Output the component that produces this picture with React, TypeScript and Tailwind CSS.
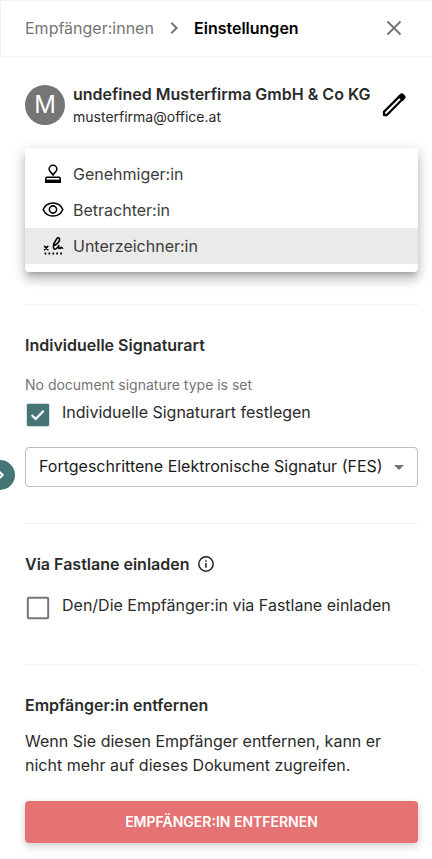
import type { ReactNode } from 'react';

function StampIcon() {
  return (
    <svg className="size-6 shrink-0" viewBox="0 0 24 24" fill="none" stroke="#000" strokeWidth="1.5">
      <path d="M12 13C11 10.8 8.1 9.6 8.1 7.2a3.9 3.9 0 0 1 7.8 0C15.9 9.6 13 10.8 12 13Z" />
      <path d="M4.9 20.3v-4.2c0-.6.3-.9.9-.9h12.4c.6 0 .9.3.9.9v4.2Z" />
      <path d="M4.2 17.6h15.6V21H4.2z" fill="#000" stroke="none" />
    </svg>
  );
}

function EyeIcon() {
  return (
    <svg className="size-6 shrink-0" viewBox="0 0 24 24" fill="none" stroke="#000" strokeWidth="1.6">
      <path d="M2.2 11.5C4 7.2 7.6 5 12 5s8 2.2 9.8 6.5c-1.8 4.3-5.4 6.5-9.8 6.5s-8-2.2-9.8-6.5Z" />
      <circle cx="12" cy="11.5" r="3.6" />
    </svg>
  );
}

function SignIcon() {
  return (
    <svg className="size-6 shrink-0" viewBox="0 0 24 24" fill="none" stroke="#000" strokeWidth="1.6" strokeLinecap="round" strokeLinejoin="round">
      <path d="m3.6 12.4 3.2 3.2m0-3.2-3.2 3.2" />
      <path d="M12.6 11.8c3.2-1.4 6-4.2 6-6.5 0-1.8-1.8-2-3-.4-1.8 2.3-3.2 5.2-3.2 7.7 0 2.4 1 3.2 2.5 2.3 1.3-.8 2.3-2.1 2.9-3.3-.4 1.7-.2 3 .8 2.9.8-.1 1.1-1.2 1.7-1.1.5.2.4.8 1.3.8" />
      <path d="M3.6 19.5h17.6" strokeWidth="1.8" strokeDasharray="1.7 2.2" strokeLinecap="butt" />
    </svg>
  );
}

function Option({ icon, label, active }: { icon: ReactNode; label: string; active?: boolean }) {
  return (
    <div className={`flex h-9 items-center gap-2 px-4 ${active ? 'bg-[#eaeaea]' : ''}`}>
      {icon}
      <span className="text-[#3c3c3c]">{label}</span>
    </div>
  );
}

export default function App() {
  return (
    <div className="relative h-[859px] w-[432px] overflow-hidden bg-white font-['Inter',sans-serif] text-base leading-6 text-[#2b2b2b]">
      <header className="flex h-[57px] items-center border border-r-0 border-[#f0f0f7] pb-px pl-6">
        <span className="w-[129px] text-[#757575]">Empfänger:innen</span>
        <svg className="ml-2 size-6" viewBox="0 0 24 24" fill="none" stroke="#757575" strokeWidth="2">
          <path d="m9.3 6.7 5.3 5.3-5.3 5.3" />
        </svg>
        <span className="ml-2 font-semibold text-black">Einstellungen</span>
        <svg className="mr-[26px] ml-auto size-6" viewBox="0 0 24 24" fill="none" stroke="#757575" strokeWidth="1.9">
          <path d="m5.5 5.5 13 13m0-13-13 13" />
        </svg>
      </header>

      <main className="pr-3.5 pl-[25px]">
        <section className="flex h-[91px] items-center pt-1">
          <div className="flex size-10 items-center justify-center rounded-full bg-[#757575] text-2xl text-white">M</div>
          <div className="ml-2 flex-1 whitespace-nowrap">
            <div className="font-semibold leading-6">undefined Musterfirma GmbH &amp; Co KG</div>
            <div className="text-sm leading-[21px]">musterfirma@office.at</div>
          </div>
          <svg className="mr-3 size-6 shrink-0" viewBox="0 0 24 24" fill="none" stroke="#000" strokeWidth="2.3" strokeLinejoin="round">
            <path d="M2 22v-3.2L18 2.9l2.9 2.9L4.9 22Z" />
            <path d="m15.6 3.4 2.3-2.2a2.7 2.7 0 0 1 3.8 0l1 1a2.7 2.7 0 0 1 0 3.8l-2.3 2.3Z" fill="#000" stroke="none" />
          </svg>
        </section>

        <div className="h-[124px] rounded bg-white py-2 shadow-[0_5px_5px_-3px_rgba(0,0,0,0.2),0_8px_10px_1px_rgba(0,0,0,0.14),0_3px_14px_2px_rgba(0,0,0,0.12)]">
          <Option icon={<StampIcon />} label="Genehmiger:in" />
          <Option icon={<EyeIcon />} label="Betrachter:in" />
          <Option icon={<SignIcon />} label="Unterzeichner:in" active />
        </div>

        <section className="mt-8 h-[219px] border-t border-[#f0f0f7] pt-7">
          <h2 className="font-semibold">Individuelle Signaturart</h2>
          <p className="mt-[18px] text-sm leading-5 text-[#757575]">No document signature type is set</p>
          <div className="flex h-10 gap-3">
            <svg className="mt-2 ml-[1px] size-6" viewBox="0 0 24 24">
              <rect x=".8" y=".8" width="22.4" height="22.4" rx="1.5" fill="#457575" />
              <path d="m5.7 12 4 4 8-8.2" fill="none" stroke="#fff" strokeWidth="2.2" />
            </svg>
            <span className="mt-[5px]">Individuelle Signaturart festlegen</span>
          </div>
          <div className="mt-3 flex h-10 items-center justify-between rounded border border-[#bdbdbd] px-[13px]">
            <span className="pb-0.5 text-[#1c1c1c]">Fortgeschrittene Elektronische Signatur (FES)</span>
            <svg className="h-[5px] w-[10px]" viewBox="0 0 10 5"><path d="M0 0h10L5 5Z" fill="#757575" /></svg>
          </div>
        </section>

        <section className="h-[141px] border-t border-[#eeeeee] pt-7">
          <h2 className="flex items-center font-semibold">
            Via Fastlane einladen
            <svg className="ml-2 size-4" viewBox="0 0 16 16" fill="none" stroke="#222" strokeWidth="1.5">
              <circle cx="8" cy="8" r="7.2" />
              <path d="M8 7v4.8M8 4.3v1.5" />
            </svg>
          </h2>
          <div className="mt-3 flex h-10 gap-3">
            <svg className="mt-2 ml-[1px] size-6" viewBox="0 0 24 24" fill="none" stroke="#757575" strokeWidth="2">
              <rect x="1.8" y="1.8" width="20.4" height="20.4" rx="1" />
            </svg>
            <span className="mt-[5px]">Den/Die Empfänger:in via Fastlane einladen</span>
          </div>
        </section>

        <section className="border-t border-[#f0f0f7] pt-7">
          <h2 className="font-semibold">Empfänger:in entfernen</h2>
          <p className="mt-3 whitespace-nowrap">
            Wenn Sie diesen Empfänger entfernen, kann er
            <br />
            nicht mehr auf dieses Dokument zugreifen.
          </p>
          <button className="mt-6 flex h-[42px] w-full items-center justify-center rounded bg-[#e57373] text-sm font-semibold text-white shadow-[0_3px_8px_rgba(0,0,0,0.2)]">
            EMPFÄNGER:IN ENTFERNEN
          </button>
        </section>
      </main>

      <div className="absolute top-[460px] -left-[15px] flex size-[30px] items-center justify-center rounded-full bg-[#457575]">
        <svg className="size-6" viewBox="0 0 24 24" fill="none" stroke="#fff" strokeWidth="2">
          <path d="m10.7 8 4 4-4 4" />
        </svg>
      </div>
    </div>
  );
}
